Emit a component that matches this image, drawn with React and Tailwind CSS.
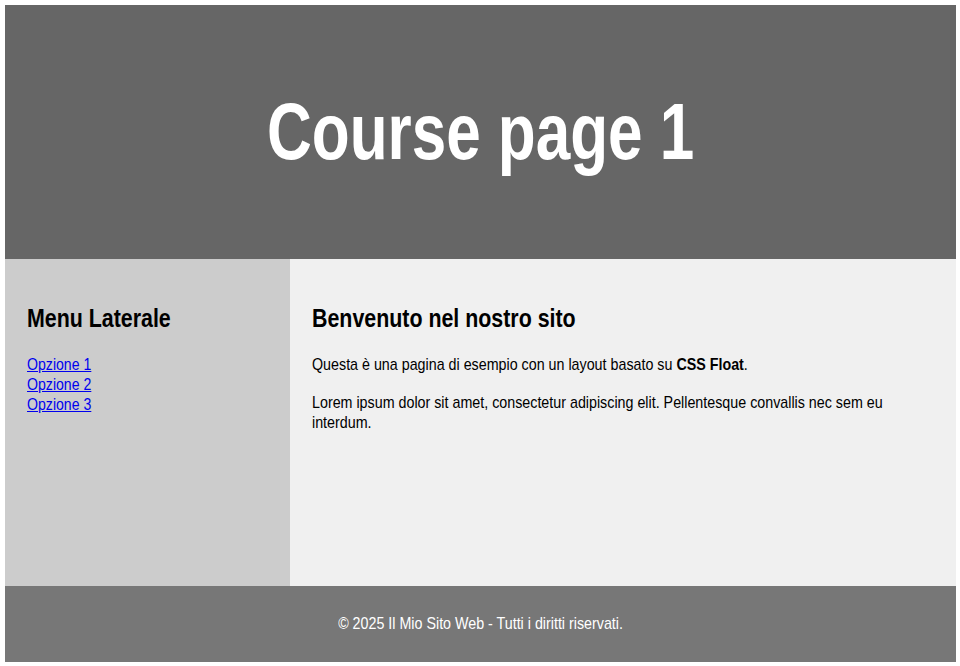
import React from "react";

const sans = { fontFamily: '"Liberation Sans", Arial, sans-serif' };

export default function App() {
  return (
    <div className="bg-white pt-[5px] pl-[5px] pr-[4px] pb-[4px] h-[666px] flex flex-col" style={sans}>
      <header className="h-[254px] bg-[#666666] flex items-center justify-center">
        <h1 className="text-[80px] font-bold text-white leading-none scale-x-[0.775] whitespace-nowrap">
          Course page 1
        </h1>
      </header>

      <div className="flex h-[327px]">
        <aside className="w-[285px] bg-[#cccccc] px-[22px] pt-[44px] overflow-hidden">
          <h2 className="text-[25px] font-bold text-black leading-[30px] origin-left scale-x-[0.855] whitespace-nowrap">
            Menu Laterale
          </h2>
          <ul className="mt-[22px] text-[17px] leading-[20px] origin-left scale-x-[0.83]">
            <li><a href="#" className="text-[#0000ee] underline">Opzione 1</a></li>
            <li><a href="#" className="text-[#0000ee] underline">Opzione 2</a></li>
            <li><a href="#" className="text-[#0000ee] underline">Opzione 3</a></li>
          </ul>
        </aside>

        <main className="flex-1 bg-[#f0f0f0] px-[22px] pt-[44px] text-black overflow-hidden">
          <h2 className="text-[25px] font-bold leading-[30px] origin-left scale-x-[0.855] whitespace-nowrap">
            Benvenuto nel nostro sito
          </h2>
          <div className="w-[714px] origin-left scale-x-[0.84] text-[17px] leading-[20px]">
            <p className="mt-[22px]">
              Questa è una pagina di esempio con un layout basato su <strong>CSS Float</strong>.
            </p>
            <p className="mt-[18px]">
              Lorem ipsum dolor sit amet, consectetur adipiscing elit. Pellentesque convallis nec sem eu interdum.
            </p>
          </div>
        </main>
      </div>

      <footer className="h-[76px] bg-[#777777] flex items-center justify-center text-white">
        <span className="text-[17px] leading-[20px] scale-x-[0.84] whitespace-nowrap">
          © 2025 Il Mio Sito Web - Tutti i diritti riservati.
        </span>
      </footer>
    </div>
  );
}
